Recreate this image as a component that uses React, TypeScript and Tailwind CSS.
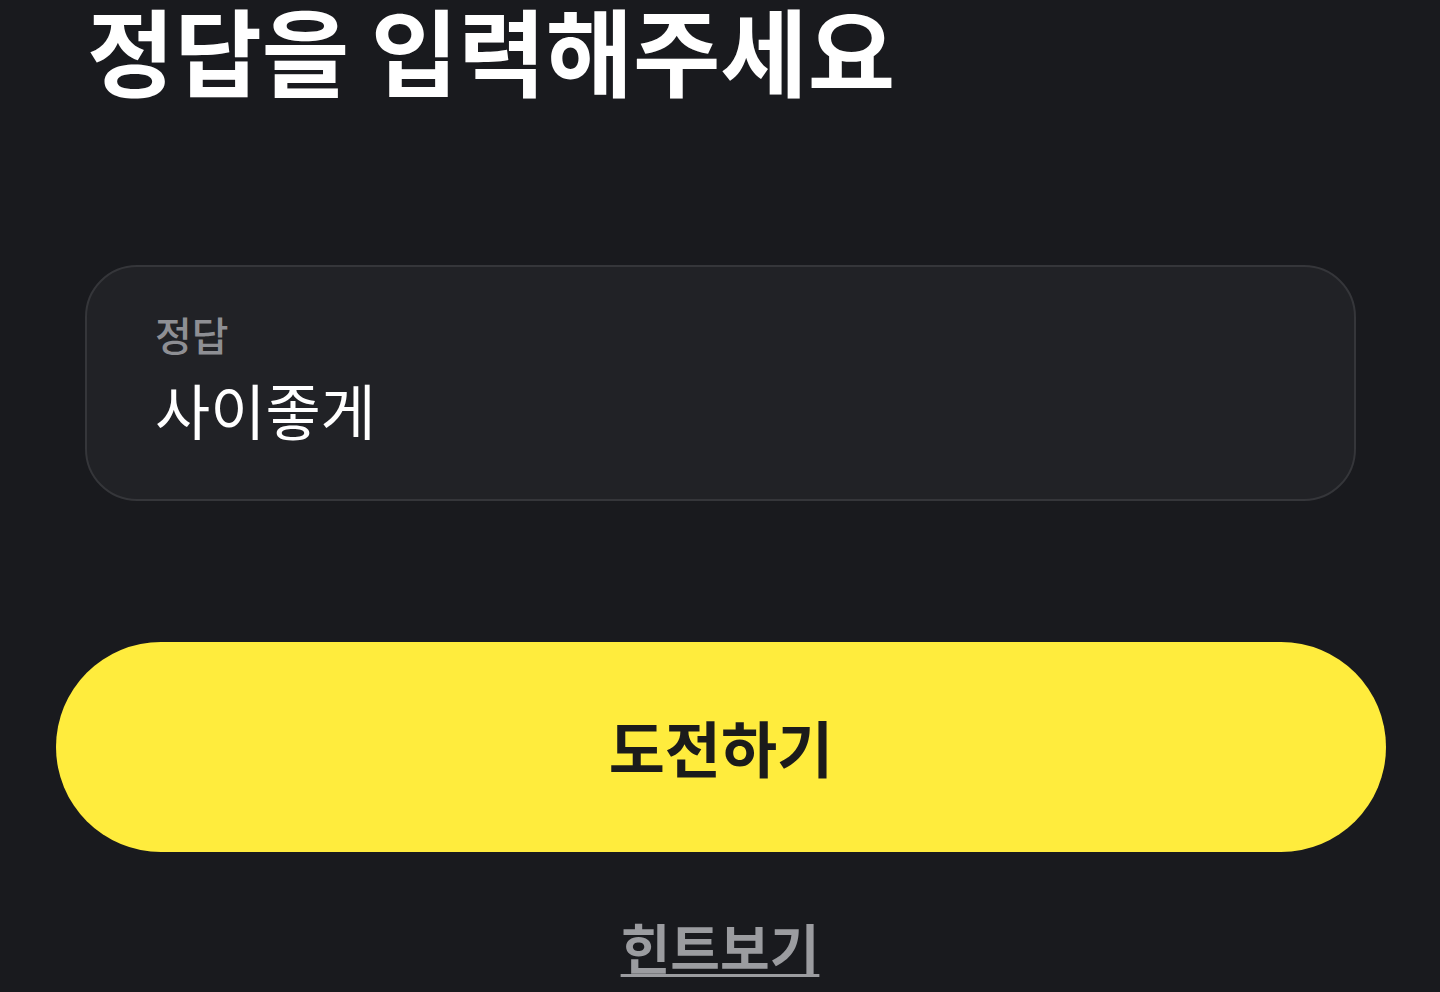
export default function App() {
  return (
    <div
      className="h-[992px] w-full overflow-hidden bg-[#191a1e] flex flex-col"
      style={{ fontFamily: '"Noto Sans CJK KR", "Noto Sans", sans-serif' }}
    >
      <h1 className="pl-[87px] pt-[1px] text-[95px] leading-none font-bold text-white whitespace-nowrap">정답을 입력해주세요</h1>

      <div className="mx-[85px] mr-[84px] mt-[169px] h-[236px] rounded-[52px] border-2 border-[#35363a] bg-[#212226] px-[68px] pt-[47px]">
        <div className="text-[40px] leading-none font-medium text-[#8e8f94]">정답</div>
        <div className="mt-[25px] text-[60px] leading-none text-white">사이좋게</div>
      </div>

      <button className="mx-[56px] mr-[54px] mt-[141px] h-[210px] rounded-full bg-[#ffec3d] text-[61px] font-bold text-[#1b1b1b]">
        도전하기
      </button>

      <div className="mt-[68px] flex justify-center">
        <span className="text-[54px] leading-none font-semibold text-[#9b9ca0] underline decoration-[3px] underline-offset-[4px]">
          힌트보기
        </span>
      </div>
    </div>
  )
}
